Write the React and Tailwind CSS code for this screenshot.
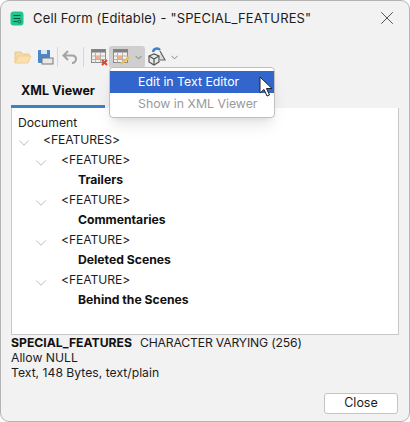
import { X, ChevronDown } from 'lucide-react';

const GridIcon = ({ children }) => (
  <svg width="20" height="20" viewBox="0 0 20 20">
    <rect x="1.5" y="2.5" width="14" height="13" fill="#f4f0ec" stroke="#8a8a8a" />
    <rect x="1.5" y="2.5" width="14" height="3" fill="#808080" />
    <path d="M1.5 9h14M1.5 12.5h14M5.5 5.5v10M10.5 5.5v10" stroke="#b5b0aa" strokeWidth="1" />
    <rect x="6" y="9" width="4" height="3" fill="#f0b090" />
    {children}
  </svg>
);

const Sep = () => <div className="w-px h-[20px] bg-[#d6d6d6]" />;

const TreeRow = ({ indent, chevron, bold, children }) => (
  <div className="flex items-center h-[20px]">
    <div className={`${indent} h-[20px] flex items-center`}>
      {chevron && <ChevronDown size={18} strokeWidth={0.8} className={`${chevron} text-[#8f8f8f] mt-[5px] shrink-0`} />}
    </div>
    <span className={bold ? 'font-bold text-[#111]' : 'text-[#1c1c1c] tracking-[-0.1px]'}>{children}</span>
  </div>
);

const features = ['Trailers', 'Commentaries', 'Deleted Scenes', 'Behind the Scenes'];

export default function App() {
  return (
    <div className="relative w-[410px] h-[422px] bg-[#f2f2f2] border border-[#b4b4b4] rounded-[9px] overflow-hidden text-[12.2px] text-[#1c1c1c] font-['Inter',sans-serif] flex flex-col">
      {/* Title bar */}
      <div className="flex items-center h-[33px] pl-[9px] pr-[11px] mt-[1px]">
        <svg width="14" height="15" viewBox="0 0 14 15" className="mr-[9px]">
          <rect x="0.5" y="0.5" width="13" height="14" rx="3" fill="#22c58b" />
          <path d="M3.5 4.5h7M3.5 7.5h7M3.5 10.5h4" stroke="#0b5a3f" strokeWidth="1" />
          <circle cx="9.5" cy="10.5" r="1.4" fill="none" stroke="#0b5a3f" strokeWidth="0.8" />
        </svg>
        <span className="text-[13px] flex-1 tracking-[0.15px]">Cell Form (Editable) - "SPECIAL_FEATURES"</span>
        <X size={22} strokeWidth={0.9} className="text-[#333] mb-[1px]" />
      </div>

      {/* Toolbar */}
      <div className="flex items-center h-[20px] mt-[12px] pl-[12px]">
        <svg width="20" height="20" viewBox="0 0 20 20">
          <path d="M2 16V5h6l1.5 2H16v2" fill="#f3d9a8" stroke="#ecc888" strokeWidth="1" />
          <path d="M2 16l3-7h13l-3 7z" fill="#f9e0ae" stroke="#f0cf94" strokeWidth="1" />
        </svg>
        <svg width="20" height="20" viewBox="0 0 20 20" className="ml-[3px]">
          <rect x="2" y="3" width="12" height="13" rx="1" fill="#4c86c6" />
          <rect x="5" y="3" width="6" height="4" fill="#d9e6f4" />
          <rect x="6" y="11" width="11" height="6" fill="#e8e8e8" stroke="#777" />
        </svg>
        <div className="ml-[1px]"><Sep /></div>
        <svg width="20" height="20" viewBox="0 0 20 20" className="ml-[2px]">
          <path d="M8 4L3.5 8.5 8 13M4 8.5h8c2.5 0 4 1.5 4 3.5s-1.5 4-4 4" fill="none" stroke="#a3a3a3" strokeWidth="2" />
        </svg>
        <div className="ml-[3px]"><Sep /></div>
        <div className="ml-[6px] mr-[-1px]">
          <GridIcon>
            <path d="M12 13l5 5M17 13l-5 5" stroke="#e0452c" strokeWidth="2" />
          </GridIcon>
        </div>
        <div className="flex items-center h-[22px] w-[36px] bg-[#cfcfcf] rounded-[3px] pl-[3px] shrink-0">
          <GridIcon>
            <path d="M9 17l8-7" stroke="#e8c060" strokeWidth="2.5" />
          </GridIcon>
          <ChevronDown size={11} strokeWidth={1.5} className="text-[#555] ml-[1px]" />
        </div>
        <svg width="20" height="20" viewBox="0 0 20 20" className="ml-[2px]">
          <path d="M2 9l5-2 5 2v6l-5 3-5-3z" fill="#e8e8e8" stroke="#555" strokeWidth="1.2" />
          <path d="M2 9l5 3 5-3M7 12v6" fill="none" stroke="#555" strokeWidth="1.2" />
          <path d="M6 5a4 4 0 017-2" fill="none" stroke="#3d80c4" strokeWidth="2.4" />
          <path d="M13 4l5 9h-5" fill="#ddd" stroke="#666" strokeWidth="1.2" />
        </svg>
        <ChevronDown size={11} strokeWidth={1.5} className="text-[#555] ml-[2px]" />
      </div>

      {/* Tab */}
      <div className="mt-[15px] ml-[10px] w-[94px] h-[23px] flex justify-center">
        <span className="font-bold text-[#111] text-[12.5px]">XML Viewer</span>
      </div>
      <div className="ml-[10px] w-[94px] h-[3px] bg-[#3d80c4]" />

      {/* Viewer */}
      <div className="mx-[10px] h-[227px] bg-white border border-[#c8c8c8] border-t-0 px-[6px] pt-[7px]">
        <div className="h-[16px] mb-[-1px] flex items-center">Document</div>
        <TreeRow indent="w-[25px]" chevron="ml-[-3px]">&lt;FEATURES&gt;</TreeRow>
        {features.map((f) => (
          <div key={f}>
            <TreeRow indent="w-[43px]" chevron="ml-[14px]">&lt;FEATURE&gt;</TreeRow>
            <TreeRow indent="w-[60px]" bold>{f}</TreeRow>
          </div>
        ))}
      </div>

      {/* Column info */}
      <div className="mx-[10px] leading-[15px]">
        <div><span className="font-bold text-[#111] mr-[8px]">SPECIAL_FEATURES</span><span className="tracking-[-0.17px]">CHARACTER VARYING (256)</span></div>
        <div>Allow NULL</div>
        <div>Text, 148 Bytes, text/plain</div>
      </div>

      {/* Footer */}
      <div className="flex justify-end mx-[11px] mt-[13px]">
        <button className="w-[74px] h-[21px] bg-white border border-[#c4c4c4] rounded-[3px] text-[12.5px]">Close</button>
      </div>

      {/* Dropdown menu */}
      <div className="absolute left-[108px] top-[66px] w-[166px] h-[51px] bg-white border border-[#c0c0c0] rounded-[4px] py-[3px] shadow-lg">
        <div className="h-[22px] bg-[#3366cc] text-white flex items-center pl-[28px] pt-[1px] text-[12.3px]">Edit in Text Editor</div>
        <div className="h-[22px] text-[#9a9a9a] flex items-center pl-[28px] pt-[1px] text-[12.3px]">Show in XML Viewer</div>
      </div>

      {/* Mouse cursor */}
      <svg width="16" height="22" viewBox="0 0 16 22" className="absolute left-[258px] top-[75px]">
        <path d="M1 1v16l4-3.5 3 6.5 2.5-1-3-6.5h5.5z" fill="#fff" stroke="#222" strokeWidth="1" />
      </svg>
    </div>
  );
}
